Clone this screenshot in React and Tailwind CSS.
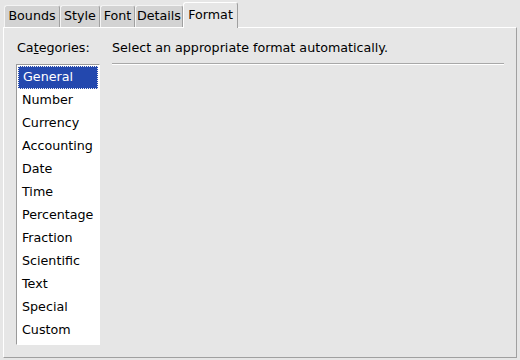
import React from 'react'

const tabs = [
  { label: 'Bounds', w: 'w-[56px]' },
  { label: 'Style', w: 'w-[40px]' },
  { label: 'Font', w: 'w-[35px]' },
  { label: 'Details', w: 'w-[48px]' },
]

const categories = [
  'General', 'Number', 'Currency', 'Accounting', 'Date', 'Time',
  'Percentage', 'Fraction', 'Scientific', 'Text', 'Special', 'Custom',
]

export default function App() {
  return (
    <div className="w-[520px] h-[360px] bg-[#e6e6e6] text-black text-[12.7px] font-['DejaVu_Sans',sans-serif] overflow-hidden">
      {/* tab strip */}
      <div className="flex items-end h-[27px] pl-[4px]">
        {tabs.map(t => (
          <div
            key={t.label}
            className={`${t.w} h-[22px] flex items-center justify-center leading-none bg-[#d3d3d3] border border-b-0 border-t-[#f4f4f4] border-l-[#f4f4f4] border-r-[#a0a0a0] rounded-t-[3px]`}
          >
            {t.label}
          </div>
        ))}
        <div className="relative z-10 -mb-px w-[55px] h-[26px] flex items-center justify-center leading-none bg-[#e6e6e6] border border-b-0 border-t-white border-l-white border-r-[#a0a0a0] rounded-t-[3px]">
          Format
        </div>
      </div>

      {/* page */}
      <div className="mx-[3px] h-[331px] border border-t-white border-l-white border-r-[#a0a0a0] border-b-[#a0a0a0] flex pl-[12px] pt-[12px]">
        <div className="w-[84px] flex flex-col">
          <div className="h-[16px] leading-[16px] pl-[1px]">
            Ca<u>t</u>egories:
          </div>
          <div className="mt-[8px] h-[281px] border border-t-[#9a9a9a] border-l-[#9a9a9a] border-r-white border-b-white bg-white p-[1px]">
            {categories.map((c, i) => (
              <div
                key={c}
                className={`h-[23px] flex items-center pl-[4px] pb-[1px] leading-none ${
                  i === 0 ? 'bg-[#2348ae] text-white border border-dotted border-[#f0f0f0] pl-[3px] pb-0' : ''
                }`}
              >
                {c}
              </div>
            ))}
          </div>
        </div>

        <div className="ml-[12px] w-[392px] flex flex-col">
          <div className="h-[16px] leading-[16px]">Select an appropriate format automatically.</div>
          <div className="mt-[7px] border-t border-t-[#a8a8a8] border-b border-b-white" />
        </div>
      </div>
    </div>
  )
}
